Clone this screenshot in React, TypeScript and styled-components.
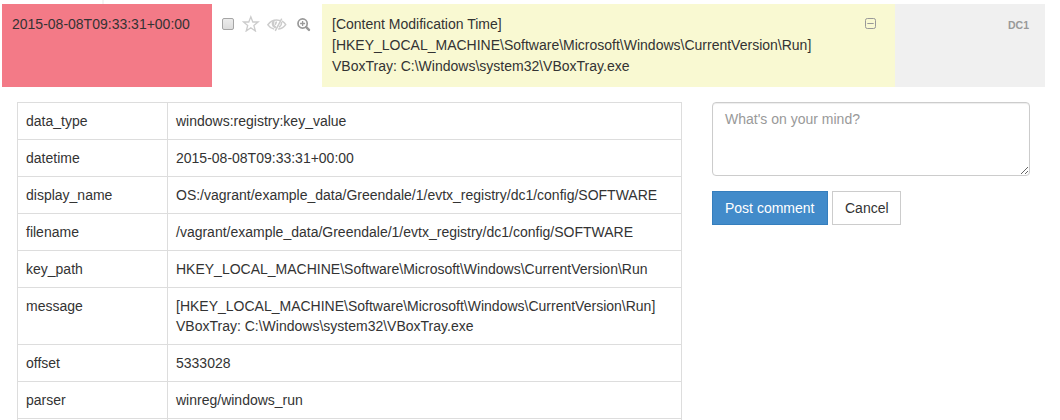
import React from "react";
import styled, { createGlobalStyle } from "styled-components";

const GlobalStyle = createGlobalStyle`
  * { box-sizing: border-box; }
  body {
    margin: 0;
    background: #fff;
    color: #333;
    font: 14px/20px "Liberation Sans", Arial, sans-serif;
  }
`;

const Page = styled.main`
  height: 420px;
  padding: 0 15px 0 2px;
  overflow: hidden;
`;

const PreviousRow = styled.div`
  height: 4px;
  width: 102px;
  border-right: 2px solid #f4f4f4;
`;

const EventRow = styled.div`
  display: grid;
  grid-template-columns: 210px 110px 573.33px 1fr;
  height: 83px;
  line-height: 21px;
`;

const Timestamp = styled.div`
  padding: 10px;
  background: #f37a87;
`;

const Tools = styled.div`
  display: flex;
  align-items: flex-start;
  padding: 10px 10px 0;
`;

const Check = styled.input`
  appearance: none;
  width: 12px;
  height: 12px;
  margin: 4px 8px 0 0;
  border: 1px solid #a5a5a5;
  border-radius: 2px;
  background: linear-gradient(#ececec, #dcdcdc);
`;

const Icon = styled.svg<{ $gap?: number }>`
  display: block;
  flex: none;
  margin-right: ${(p) => p.$gap ?? 0}px;
`;

const Message = styled.div`
  display: flex;
  justify-content: space-between;
  padding: 10px 18px 10px 10px;
  background: #f9f9d2;
  white-space: pre;
`;

const Collapse = styled.span`
  padding-top: 4px;
`;

const Source = styled.div`
  padding: 11px 16px 10px;
  background: #f0f0f0;
  color: #999;
  font-size: 10.5px;
  font-weight: bold;
  text-align: right;
`;

const Details = styled.div`
  display: flex;
  align-items: flex-start;
  gap: 30px;
  padding: 15px 15px 0;
`;

const Attributes = styled.table`
  width: 665px;
  flex: none;
  table-layout: fixed;
  border-collapse: collapse;
`;

const Cell = styled.td<{ $width?: number }>`
  width: ${(p) => (p.$width ? `${p.$width}px` : "auto")};
  height: 37px;
  padding: 8px;
  border: 1px solid #ddd;
  vertical-align: top;
  white-space: pre;
`;

const CommentForm = styled.form`
  display: flex;
  flex-direction: column;
  gap: 15px;
  width: 318px;
`;

const CommentBox = styled.textarea`
  display: block;
  width: 100%;
  height: 74px;
  padding: 6px 12px;
  border: 1px solid #ccc;
  border-radius: 4px;
  box-shadow: inset 0 1px 1px rgba(0, 0, 0, 0.075);
  color: #555;
  font: inherit;
  resize: vertical;
  &::placeholder { color: #999; }
`;

const Actions = styled.div`
  display: flex;
  gap: 4px;
`;

const Button = styled.button<{ $primary?: boolean }>`
  width: ${(p) => (p.$primary ? 116 : 69)}px;
  height: 34px;
  padding: 6px 0 6px 12px;
  border: 1px solid ${(p) => (p.$primary ? "#357ebd" : "#ccc")};
  background: ${(p) => (p.$primary ? "#428bca" : "#fff")};
  color: ${(p) => (p.$primary ? "#fff" : "#333")};
  font: inherit;
  text-align: left;
  white-space: nowrap;
`;

const attributes: [string, string][] = [
  ["data_type", "windows:registry:key_value"],
  ["datetime", "2015-08-08T09:33:31+00:00"],
  ["display_name", "OS:/vagrant/example_data/Greendale/1/evtx_registry/dc1/config/SOFTWARE"],
  ["filename", "/vagrant/example_data/Greendale/1/evtx_registry/dc1/config/SOFTWARE"],
  ["key_path", "HKEY_LOCAL_MACHINE\\Software\\Microsoft\\Windows\\CurrentVersion\\Run"],
  ["message", "[HKEY_LOCAL_MACHINE\\Software\\Microsoft\\Windows\\CurrentVersion\\Run]\nVBoxTray: C:\\Windows\\system32\\VBoxTray.exe"],
  ["offset", "5333028"],
  ["parser", "winreg/windows_run"],
  ["", ""],
];

const StarIcon = () => (
  <Icon $gap={7} width="18" height="18" viewBox="0 0 18 18">
    <path
      d="M8.8 2.8 10.8 8H16.1L11.9 11.4 13.4 17 8.8 13.7 4.2 17 5.7 11.4 1.5 8H6.8Z"
      fill="none" stroke="#ccc" strokeWidth="1.3"
    />
  </Icon>
);

const EyeClosedIcon = () => (
  <Icon $gap={10} width="20" height="18" viewBox="0 0 20 18">
    <g fill="none" stroke="#ccc" strokeLinecap="round">
      <path d="M6.6 14.9C4 14.2 2 12.4 .9 10.8 3 7.9 6.2 6 9.6 6c1 0 1.9.1 2.7.4" strokeWidth="1.5" />
      <path d="M6.4 7.6c-1.1 2.2-.4 4.4 1.5 5.3" strokeWidth="2.4" />
      <path d="M9.3 8.2 8.4 10.2" strokeWidth="1.7" />
      <path d="M14.5 5.2 8.5 16.4" strokeWidth="1.5" />
      <path d="M15.5 7.3c1.4.8 2.5 2.1 3.2 3.4-1.6 2.4-4 4-7 4.3" strokeWidth="1.5" />
      <path d="M14.5 8.6c.1 1.9-.7 3.4-2 4.2" strokeWidth="1.6" />
    </g>
  </Icon>
);

const ZoomInIcon = () => (
  <Icon width="14" height="18" viewBox="0 0 14 18">
    <g fill="none" stroke="#999">
      <circle cx="5.6" cy="9.5" r="4.6" strokeWidth="1.7" />
      <path d="M3.1 9.5H8.1M5.6 7V12" strokeWidth="1.3" />
      <path d="M9.2 13.1 12 15.9" strokeWidth="2.4" strokeLinecap="round" />
    </g>
  </Icon>
);

const MinusSquareIcon = () => (
  <Icon width="12" height="12" viewBox="0 0 12 12">
    <rect x=".5" y=".5" width="10" height="10" rx="1.8" fill="none" stroke="#999" />
    <path d="M2.3 5.5H8.7" stroke="#999" />
  </Icon>
);

export default function App() {
  return (
    <Page>
      <GlobalStyle />
      <PreviousRow />
      <EventRow>
        <Timestamp>2015-08-08T09:33:31+00:00</Timestamp>
        <Tools>
          <Check type="checkbox" />
          <StarIcon />
          <EyeClosedIcon />
          <ZoomInIcon />
        </Tools>
        <Message>
          {"[Content Modification Time]\n[HKEY_LOCAL_MACHINE\\Software\\Microsoft\\Windows\\CurrentVersion\\Run]\nVBoxTray: C:\\Windows\\system32\\VBoxTray.exe"}
          <Collapse>
            <MinusSquareIcon />
          </Collapse>
        </Message>
        <Source>DC1</Source>
      </EventRow>
      <Details>
        <Attributes>
          <tbody>
            {attributes.map(([name, value]) => (
              <tr key={name}>
                <Cell $width={150}>{name}</Cell>
                <Cell>{value}</Cell>
              </tr>
            ))}
          </tbody>
        </Attributes>
        <CommentForm>
          <CommentBox placeholder="What's on your mind?" />
          <Actions>
            <Button type="button" $primary>Post comment</Button>
            <Button type="button">Cancel</Button>
          </Actions>
        </CommentForm>
      </Details>
    </Page>
  );
}
